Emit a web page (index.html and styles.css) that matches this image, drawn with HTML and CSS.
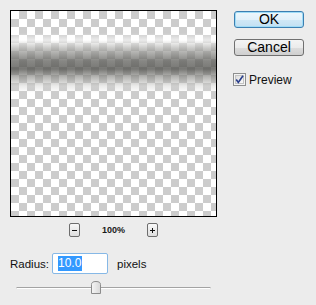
FILE: index.html
```html
<!DOCTYPE html>
<html lang="en">
<head>
    <meta name="viewport" content="width=device-width, initial-scale=1">
    <link rel="stylesheet" href="styles.css">
    <title>Gaussian Blur</title>
</head>
<body>
<div class="dialog">
    <div class="main">
        <div class="previewCol">
            <div class="preview"></div>
            <div class="zoomRow">
                <span class="zoomBtn">
                    <svg width="11" height="14" viewBox="0 0 11 14">
                        <rect x="3" y="7" width="5" height="1" fill="#111"/>
                    </svg>
                </span>
                <span class="zoomPct">100%</span>
                <span class="zoomBtn">
                    <svg width="11" height="14" viewBox="0 0 11 14">
                        <rect x="3" y="7" width="5" height="1" fill="#111"/>
                        <rect x="5" y="5" width="1" height="5" fill="#111"/>
                    </svg>
                </span>
            </div>
        </div>
        <div class="side">
            <button class="btn btnDefault">OK</button>
            <button class="btn btnCancel">Cancel</button>
            <label class="check">
                <svg width="13" height="13" viewBox="0 0 13 13">
                    <defs>
                        <linearGradient id="cbFill" x1="0" y1="0" x2="1" y2="1">
                            <stop offset="0" stop-color="#dcdcdc"/>
                            <stop offset="1" stop-color="#fbfbfb"/>
                        </linearGradient>
                    </defs>
                    <rect x="0.5" y="0.5" width="12" height="12" fill="#f4f4f4" stroke="#8e8f8f"/>
                    <rect x="2.5" y="2.5" width="8" height="8" fill="url(#cbFill)" stroke="#c4c4c4"/>
                    <path d="M3.2 6.6 L5.3 9.4 L10 2.8" fill="none" stroke="#2a3f8c" stroke-width="1.7"/>
                </svg>
                <span>Preview</span>
            </label>
        </div>
    </div>
    <div class="radiusRow">
        <span class="label">Radius:</span>
        <div class="field"><span class="sel">10.0</span></div>
        <span class="unit">pixels</span>
    </div>
    <div class="sliderRow">
        <div class="track"></div>
        <svg class="thumb" width="10" height="13" viewBox="0 0 10 13">
            <defs>
                <linearGradient id="thumbFill" x1="0" y1="0" x2="1" y2="0">
                    <stop offset="0" stop-color="#f6f6f6"/>
                    <stop offset="1" stop-color="#d8d8d8"/>
                </linearGradient>
            </defs>
            <path d="M0.5 12.5 V3.5 Q0.5 0.5 5 0.5 Q9.5 0.5 9.5 3.5 V12.5 Z" fill="url(#thumbFill)" stroke="#8c8c8c"/>
        </svg>
    </div>
</div>
</body>
</html>
```
FILE: styles.css
```css
body {
    margin: 0;
    background: #ececec;
    font-family: "Liberation Sans", Arial, sans-serif;
    color: #111;
}
.dialog {
    padding: 10px 0 0 10px;
}
.main {
    display: flex;
}

/* preview area */
.previewCol {
    width: 207px;
}
.preview {
    box-sizing: border-box;
    width: 207px;
    height: 207px;
    border: 1px solid #000;
    background:
        linear-gradient(to bottom,
            rgba(255,255,255,0) 22px,
            rgba(255,255,255,0.6) 29px,
            rgba(170,170,167,0.7) 38px,
            rgba(95,95,91,0.75) 50px,
            rgba(82,82,78,0.78) 58px,
            rgba(135,135,131,0.6) 66px,
            rgba(210,210,208,0.45) 75px,
            rgba(230,230,230,0) 82px),
        repeating-conic-gradient(#cccccc 0 25%, #ffffff 0 50%) 0 0 / 16px 16px;
}
.zoomRow {
    display: flex;
    justify-content: center;
    align-items: center;
    gap: 22px;
    height: 14px;
    margin-top: 6px;
}
.zoomBtn {
    box-sizing: border-box;
    display: block;
    width: 11px;
    height: 14px;
    border: 1px solid #6d6d6d;
    border-radius: 2px;
    background: linear-gradient(to bottom, #f8f8f8, #dedede);
    overflow: hidden;
}
.zoomBtn svg {
    display: block;
    margin: -1px 0 0 -1px;
}
.zoomPct {
    font-size: 9px;
    font-weight: bold;
    color: #1a1a1a;
    width: 23px;
    text-align: center;
}

/* buttons on the right */
.side {
    width: 70px;
    margin-left: 17px;
    padding-top: 1px;
}
.btn {
    display: block;
    box-sizing: border-box;
    width: 70px;
    height: 17px;
    padding: 0;
    font-family: "Liberation Sans", Arial, sans-serif;
    font-size: 14px;
    line-height: 15px;
    color: #000;
    border-radius: 3px;
    border: 1px solid #707070;
    background: linear-gradient(to bottom, #f4f4f4 0%, #ebebeb 50%, #dddddd 51%, #cfcfcf 100%);
}
.btnDefault {
    border-color: #3c7fb1;
    box-shadow: inset 0 0 0 1px #9fdcf7;
    background: linear-gradient(to bottom, #eef7fc 0%, #e2f1fa 50%, #d0e8f6 51%, #c2e0f2 100%);
}
.btnCancel {
    margin-top: 11px;
}
.check {
    display: flex;
    align-items: center;
    gap: 3px;
    margin: 17px 0 0 -1px;
    font-size: 12px;
    height: 13px;
}
.check svg {
    display: block;
}

/* radius input */
.radiusRow {
    display: flex;
    align-items: center;
    margin-top: 16px;
    height: 21px;
    font-size: 11.5px;
}
.label {
    width: 42px;
}
.field {
    box-sizing: border-box;
    width: 56px;
    height: 21px;
    border: 1px solid #86b8e6;
    border-radius: 2px;
    background: #fff;
    padding: 2px 0 0 5px;
    font-size: 12px;
}
.sel {
    display: inline-block;
    background: #3399ff;
    color: #fff;
    line-height: 15px;
    padding: 0 1px 0 0;
}
.unit {
    margin-left: 9px;
}

/* slider */
.sliderRow {
    position: relative;
    width: 195px;
    height: 14px;
    margin: 7px 0 0 6px;
}
.track {
    position: relative;
    top: 6px;
    height: 1px;
    background: #a3a3a3;
    border-bottom: 1px solid #ffffff;
    border-left: 1px solid #c8c8c8;
    border-right: 1px solid #c8c8c8;
}
.thumb {
    position: absolute;
    left: 75px;
    top: 0;
}
```
